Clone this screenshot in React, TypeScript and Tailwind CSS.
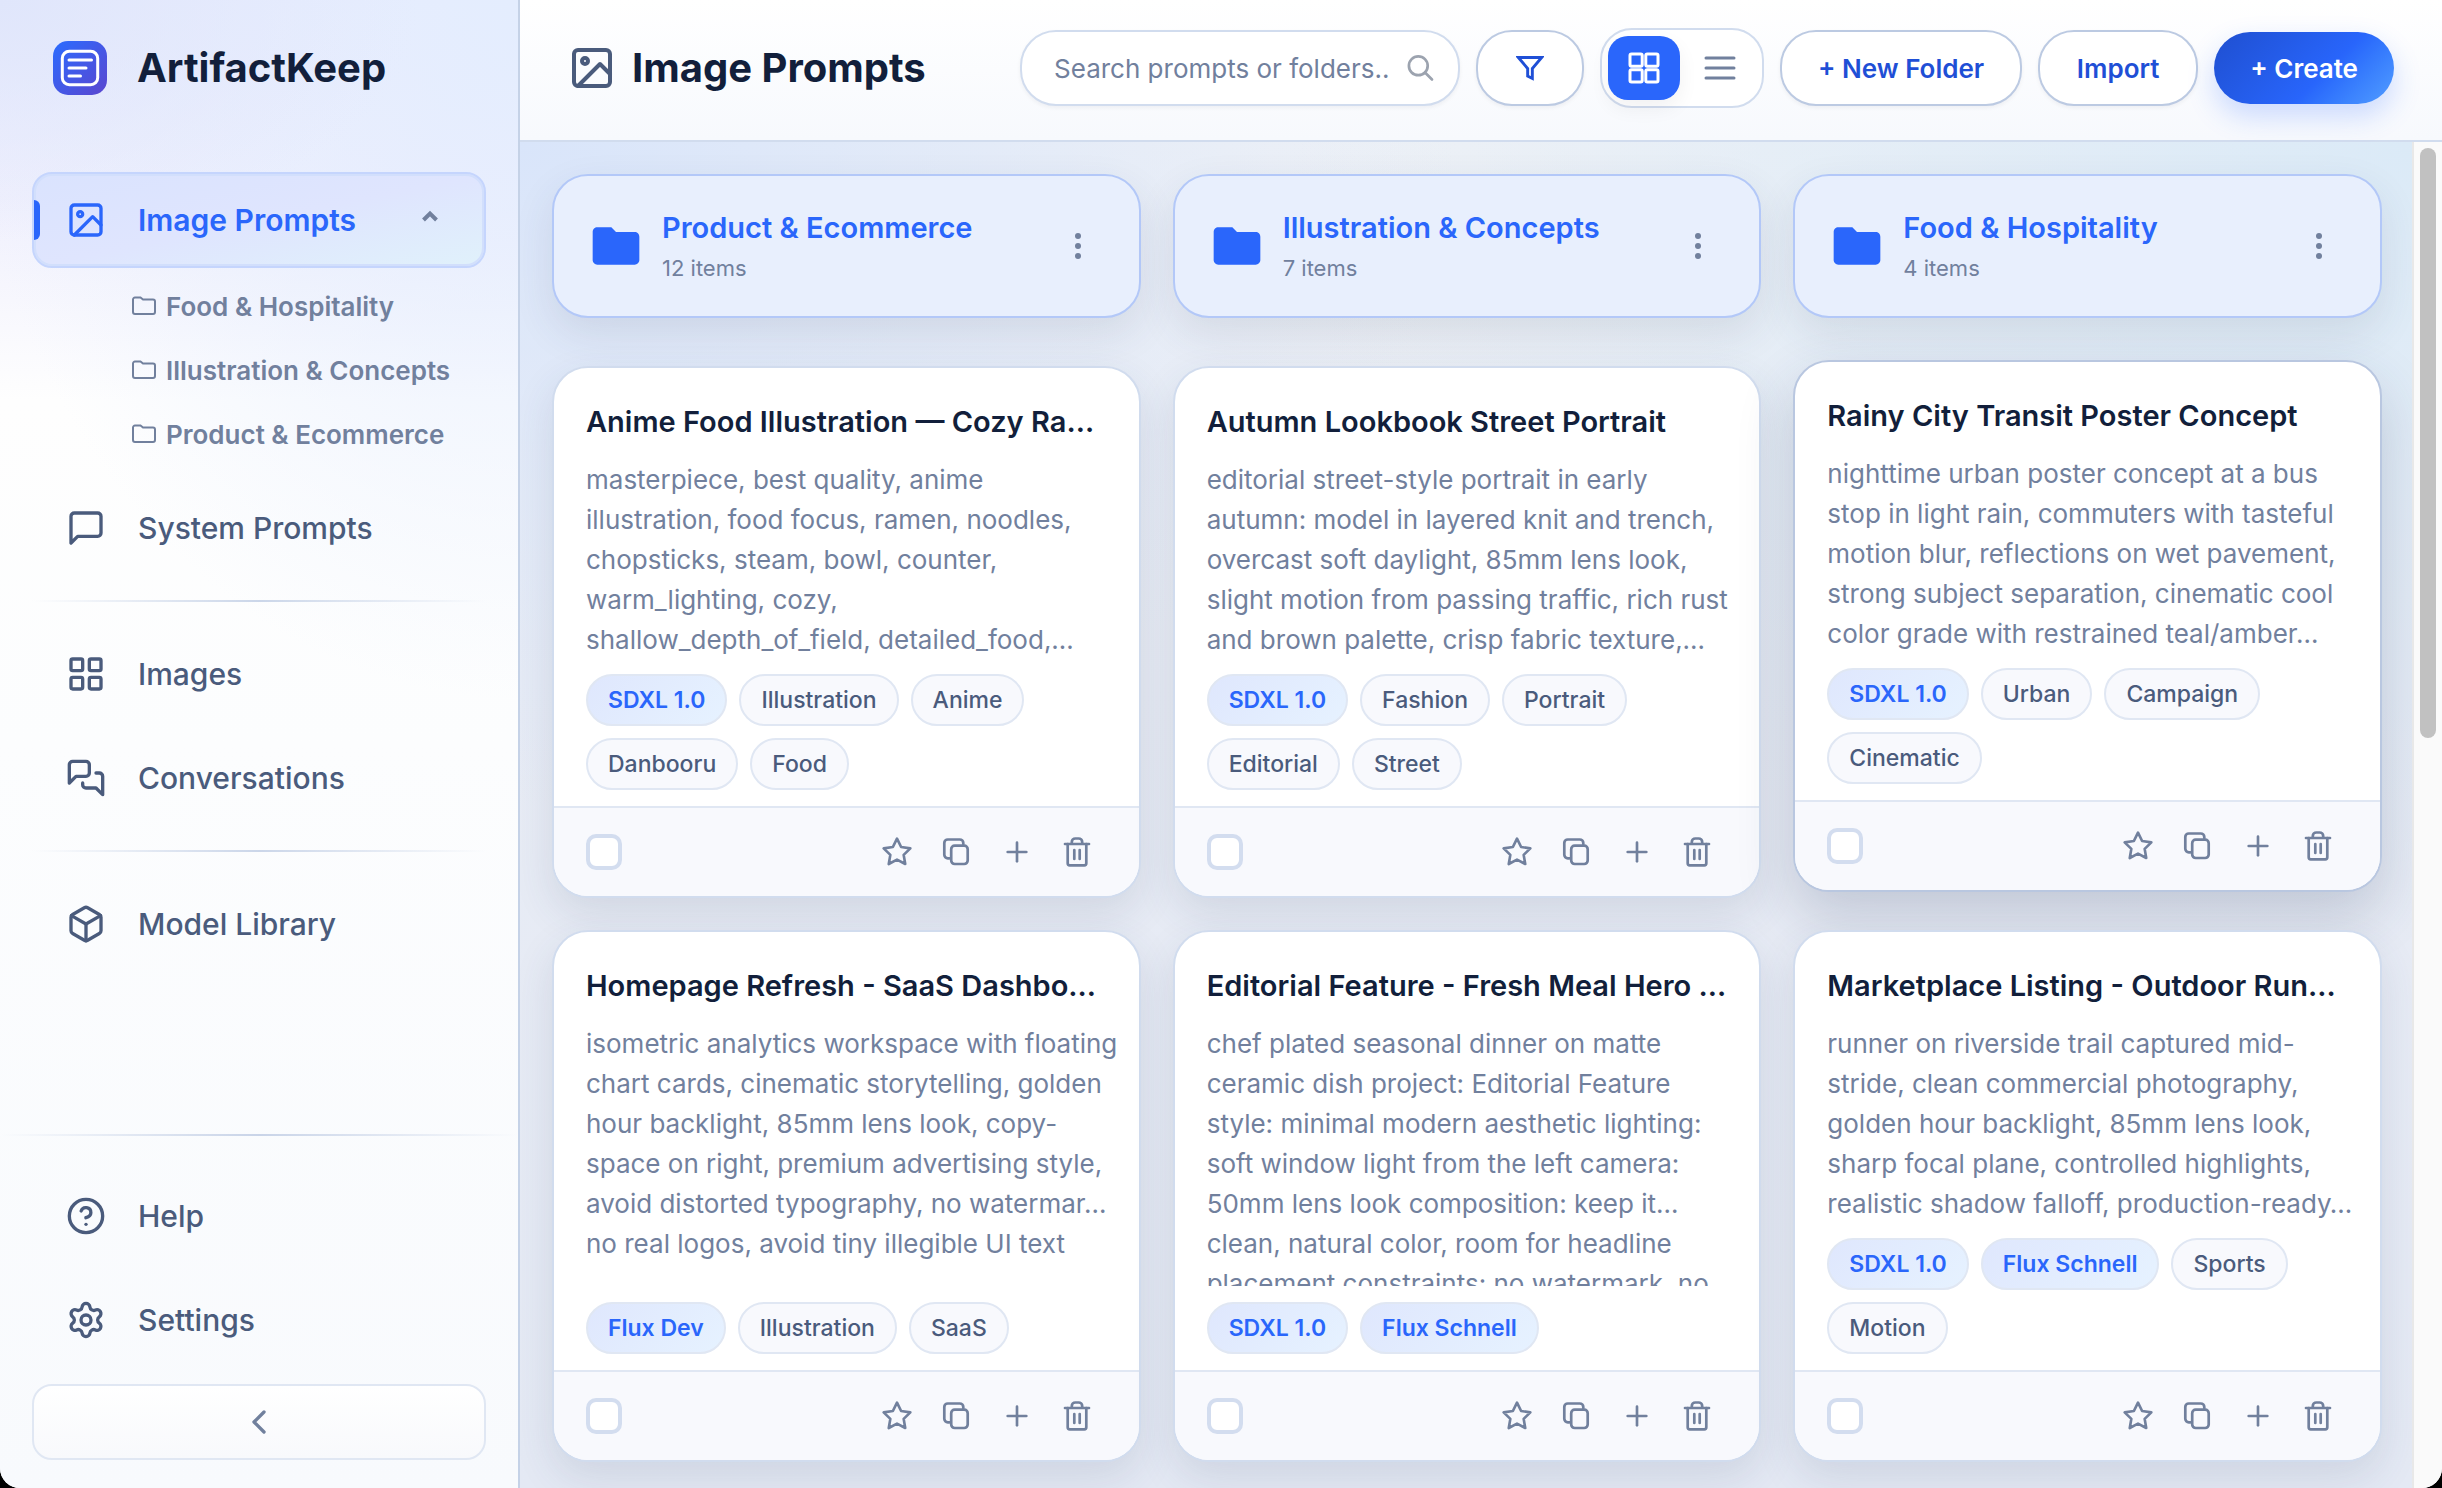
import { useState, type ReactNode } from "react";
import clsx from "clsx";
import { ChevronLeft, LayoutGrid, Plus, Settings } from "lucide-react";
import {
  FiBox,
  FiFilter,
  FiHelpCircle,
  FiImage,
  FiMessageSquare,
  FiStar,
} from "react-icons/fi";
import { MdFolder } from "react-icons/md";

const folders = [
  { name: "Product & Ecommerce", count: 12 },
  { name: "Illustration & Concepts", count: 7 },
  { name: "Food & Hospitality", count: 4 },
];

type Tag = { label: string; model?: boolean };
type Prompt = {
  title: string;
  lines: string[];
  tags: Tag[];
  lifted?: boolean;
};

const prompts: Prompt[] = [
  {
    title: "Anime Food Illustration — Cozy Ra…",
    lines: [
      "masterpiece, best quality, anime",
      "illustration, food focus, ramen, noodles,",
      "chopsticks, steam, bowl, counter,",
      "warm_lighting, cozy,",
      "shallow_depth_of_field, detailed_food,…",
    ],
    tags: [
      { label: "SDXL 1.0", model: true },
      { label: "Illustration" },
      { label: "Anime" },
      { label: "Danbooru" },
      { label: "Food" },
    ],
  },
  {
    title: "Autumn Lookbook Street Portrait",
    lines: [
      "editorial street-style portrait in early",
      "autumn: model in layered knit and trench,",
      "overcast soft daylight, 85mm lens look,",
      "slight motion from passing traffic, rich rust",
      "and brown palette, crisp fabric texture,…",
    ],
    tags: [
      { label: "SDXL 1.0", model: true },
      { label: "Fashion" },
      { label: "Portrait" },
      { label: "Editorial" },
      { label: "Street" },
    ],
  },
  {
    title: "Rainy City Transit Poster Concept",
    lines: [
      "nighttime urban poster concept at a bus",
      "stop in light rain, commuters with tasteful",
      "motion blur, reflections on wet pavement,",
      "strong subject separation, cinematic cool",
      "color grade with restrained teal/amber…",
    ],
    tags: [
      { label: "SDXL 1.0", model: true },
      { label: "Urban" },
      { label: "Campaign" },
      { label: "Cinematic" },
    ],
    lifted: true,
  },
  {
    title: "Homepage Refresh - SaaS Dashbo…",
    lines: [
      "isometric analytics workspace with floating",
      "chart cards, cinematic storytelling, golden",
      "hour backlight, 85mm lens look, copy-",
      "space on right, premium advertising style,",
      "avoid distorted typography, no watermar…",
      "no real logos, avoid tiny illegible UI text",
    ],
    tags: [
      { label: "Flux Dev", model: true },
      { label: "Illustration" },
      { label: "SaaS" },
    ],
  },
  {
    title: "Editorial Feature - Fresh Meal Hero …",
    lines: [
      "chef plated seasonal dinner on matte",
      "ceramic dish project: Editorial Feature",
      "style: minimal modern aesthetic lighting:",
      "soft window light from the left camera:",
      "50mm lens look composition: keep it…",
      "clean, natural color, room for headline",
      "placement constraints: no watermark, no",
    ],
    tags: [
      { label: "SDXL 1.0", model: true },
      { label: "Flux Schnell", model: true },
    ],
  },
  {
    title: "Marketplace Listing - Outdoor Run…",
    lines: [
      "runner on riverside trail captured mid-",
      "stride, clean commercial photography,",
      "golden hour backlight, 85mm lens look,",
      "sharp focal plane, controlled highlights,",
      "realistic shadow falloff, production-ready…",
    ],
    tags: [
      { label: "SDXL 1.0", model: true },
      { label: "Flux Schnell", model: true },
      { label: "Sports" },
      { label: "Motion" },
    ],
  },
];

const LogoIcon = () => (
  <svg viewBox="0 0 54 54" fill="none" className="size-[54px]" aria-hidden="true">
    <defs>
      <linearGradient id="logo" x1="0" y1="0" x2="54" y2="54" gradientUnits="userSpaceOnUse">
        <stop stopColor="#2b6cff" />
        <stop offset="1" stopColor="#5b46cf" />
      </linearGradient>
    </defs>
    <rect width="54" height="54" rx="15" fill="url(#logo)" />
    <rect x="9.3" y="10.3" width="35.4" height="33.4" rx="7" stroke="#fff" strokeWidth="3" />
    <path d="M16 19h22.5M16 27h17M16 35h11.5" stroke="#fff" strokeWidth="3" strokeLinecap="round" />
  </svg>
);

const ConversationsIcon = () => (
  <svg
    viewBox="0 0 24 24"
    fill="none"
    stroke="currentColor"
    strokeWidth="2"
    strokeLinecap="round"
    strokeLinejoin="round"
    className="size-10"
  >
    <path d="M14 9a2 2 0 0 1-2 2H6l-4 4V4a2 2 0 0 1 2-2h8a2 2 0 0 1 2 2z" />
    <path d="M18 9h2a2 2 0 0 1 2 2v11l-4-4h-6a2 2 0 0 1-2-2v-1" />
  </svg>
);

const FolderOutlineIcon = () => (
  <svg viewBox="0 0 24 24" fill="none" stroke="currentColor" strokeWidth="2" className="size-6">
    <path d="M3 3.500h5.500l2.500 2h10a2 2 0 0 1 2 2v10.500a2 2 0 0 1-2 2H3a2 2 0 0 1-2-2V5.500a2 2 0 0 1 2-2z" />
  </svg>
);

const SearchIcon = () => (
  <svg
    viewBox="0 0 28 28"
    fill="none"
    stroke="currentColor"
    strokeWidth="2.7"
    strokeLinecap="round"
    className="size-7 shrink-0 text-[#9ca3af]"
  >
    <circle cx="12.3" cy="11.8" r="9.4" />
    <path d="M19 18.500l7 7" />
  </svg>
);

const TilesIcon = () => (
  <svg viewBox="0 0 32 32" fill="none" stroke="currentColor" strokeWidth="3" className="size-8">
    <rect x="2" y="2" width="12.2" height="12.2" rx="1.5" />
    <rect x="17.8" y="2" width="12.2" height="12.2" rx="1.5" />
    <rect x="2" y="17.8" width="12.2" height="12.2" rx="1.5" />
    <rect x="17.8" y="17.8" width="12.2" height="12.2" rx="1.5" />
  </svg>
);

const RowsIcon = () => (
  <svg
    viewBox="0 0 32 32"
    stroke="currentColor"
    strokeWidth="3"
    strokeLinecap="round"
    className="size-8"
  >
    <path d="M2 6h28M2 16h28M2 26h28" />
  </svg>
);

const CopyIcon = () => (
  <svg
    viewBox="0 0 32 32"
    fill="none"
    stroke="currentColor"
    strokeWidth="2.7"
    strokeLinecap="round"
    strokeLinejoin="round"
    className="size-8"
  >
    <rect x="10.2" y="9.7" width="16.5" height="18.3" rx="3.5" />
    <path d="M8.5 22.3H6.8a3.5 3.5 0 0 1-3.5-3.5V7a3.5 3.5 0 0 1 3.5-3.5h12a3.5 3.5 0 0 1 3.5 3.5v1" />
  </svg>
);

const TrashIcon = () => (
  <svg
    viewBox="0 0 32 32"
    fill="none"
    stroke="currentColor"
    strokeWidth="2.7"
    strokeLinecap="round"
    strokeLinejoin="round"
    className="size-8"
  >
    <path d="M4 8h24M10.8 7.5V6a3.5 3.5 0 0 1 3.500-3.500h3.400a3.500 3.500 0 0 1 3.500 3.500v1.500" />
    <path d="M6.7 8v19.300a2 2 0 0 0 2 2h14.600a2 2 0 0 0 2-2V8M13.3 14v9M18.7 14v9" />
  </svg>
);

const NavItem = ({
  icon,
  label,
  active = false,
}: {
  icon: ReactNode;
  label: string;
  active?: boolean;
}) => (
  <a
    href="#"
    className={clsx(
      "relative flex h-24 items-center gap-8 rounded-[20px] border-2 pr-[42px] pl-8 text-[30px]",
      active
        ? "border-[#c5d5fd] bg-linear-to-br from-[#dae3fe] via-[#dfe5fe] to-[#e0f1fb] font-semibold text-[#2a66fb] inset-ring-2 inset-ring-[#d2dffc]"
        : "border-transparent font-medium text-[#4a5b7c]"
    )}
  >
    {active && (
      <span className="absolute top-[26px] left-0 h-10 w-1.5 rounded-r-md bg-[#2a66fb]" />
    )}
    {icon}
    <span className="flex-1 whitespace-nowrap">{label}</span>
    {active && (
      <svg
        viewBox="0 0 24 24"
        fill="none"
        stroke="#71809d"
        strokeWidth="4"
        className="size-6"
      >
        <path d="M5.500 12l6.500-6.500 6.500 6.500" />
      </svg>
    )}
  </a>
);

const Divider = () => (
  <div className="mt-4 mb-6 h-0.5 bg-linear-to-r from-transparent via-[#cbd6e9] to-transparent" />
);

const Sidebar = () => (
  <aside className="flex w-[520px] shrink-0 flex-col border-r-2 border-[#c5d2e7] bg-[radial-gradient(420px_240px_at_0%_0%,#e0e6fb_0%,transparent_100%),radial-gradient(560px_700px_at_100%_0%,#e4edfe_0%,transparent_100%),linear-gradient(to_bottom,#ebedfe_0px,#f0f0fd_200px,#fefefe_400px,#fcfdfe_50%,#f8fafd_100%)]">
    <div className="flex h-[136px] shrink-0 items-center gap-[30px] pl-[53px]">
      <LogoIcon />
      <span className="text-[40px] font-bold text-[#121f3b]">ArtifactKeep</span>
    </div>

    <nav className="flex flex-1 flex-col px-8 pt-9">
      <NavItem icon={<FiImage className="size-10" />} label="Image Prompts" active />
      <ul className="mt-1.5 mb-3.5 pl-[100px]">
        {["Food & Hospitality", "Illustration & Concepts", "Product & Ecommerce"].map((name) => (
          <li key={name}>
            <a
              href="#"
              className="flex h-16 items-center gap-2.5 text-[26px] font-semibold whitespace-nowrap text-[#71809d]"
            >
              <FolderOutlineIcon />
              {name}
            </a>
          </li>
        ))}
      </ul>
      <NavItem icon={<FiMessageSquare className="size-10" />} label="System Prompts" />
      <div className="h-2" />
      <Divider />
      <NavItem icon={<LayoutGrid className="size-10" />} label="Images" />
      <div className="h-2" />
      <NavItem icon={<ConversationsIcon />} label="Conversations" />
      <div className="h-2" />
      <Divider />
      <NavItem icon={<FiBox className="size-10" />} label="Model Library" />
    </nav>

    <div className="flex flex-col gap-2 pb-7">
      <div className="mb-6 h-0.5 bg-linear-to-r from-transparent via-[#c9d4e8] to-transparent" />
      <div className="flex flex-col gap-2 px-8">
        <NavItem icon={<FiHelpCircle className="size-10" />} label="Help" />
        <NavItem icon={<Settings className="size-10" />} label="Settings" />
        <button
          type="button"
          aria-label="Collapse sidebar"
          className="mt-2 flex h-[76px] items-center justify-center rounded-[20px] border-2 border-[#e0e7f3] bg-linear-to-b from-white to-[#f8f9fc] text-[#71809d]"
        >
          <ChevronLeft className="size-10" />
        </button>
      </div>
    </div>
  </aside>
);

const outlineButton =
  "flex h-[76px] shrink-0 items-center justify-center rounded-[36px] border-2 border-[#bccae2] bg-white text-[26px] font-semibold whitespace-nowrap text-[#1f4fd6] shadow-[0_2px_4px_rgba(15,23,42,0.05)]";

const Header = () => (
  <header className="flex h-[142px] shrink-0 items-center gap-4 border-b-2 border-[#d1dcee] bg-linear-to-b from-white to-[#f7f9fd] pr-12 pb-1 pl-12">
    <h1 className="flex flex-1 items-center gap-4 text-[40px] font-bold whitespace-nowrap text-[#121f3b]">
      <FiImage className="size-12 shrink-0 text-[#4a5b7c]" />
      Image Prompts
    </h1>
    <label className="flex h-[76px] w-[440px] items-center rounded-[36px] border-2 border-[#d1dcee] bg-white pr-6 pl-8 shadow-[0_2px_4px_rgba(15,23,42,0.05)]">
      <input
        type="text"
        aria-label="Search prompts or folders"
        placeholder="Search prompts or folders.."
        className="min-w-0 flex-1 text-[26px] text-[#121f3b] outline-none placeholder:text-[#71809d]"
      />
      <SearchIcon />
    </label>
    <button type="button" aria-label="Filter" className={clsx(outlineButton, "w-[108px]")}>
      <FiFilter className="size-7 [stroke-linecap:butt] [stroke-linejoin:miter] [stroke-width:2.5]" />
    </button>
    <div className="flex h-20 shrink-0 gap-1 rounded-[32px] border-2 border-[#d1dcee] bg-white p-1.5">
      <button
        type="button"
        aria-label="Grid view"
        className="flex w-[72px] items-center justify-center rounded-[20px] bg-[#2a66fb] text-white shadow-[0_8px_20px_rgba(15,23,42,0.06)]"
      >
        <TilesIcon />
      </button>
      <button
        type="button"
        aria-label="List view"
        className="flex w-[72px] items-center justify-center rounded-[20px] text-[#71809d]"
      >
        <RowsIcon />
      </button>
    </div>
    <button type="button" className={clsx(outlineButton, "px-9")}>
      + New Folder
    </button>
    <button type="button" className={clsx(outlineButton, "w-40")}>
      Import
    </button>
    <button
      type="button"
      className="flex h-[72px] shrink-0 items-center rounded-[36px] bg-linear-135 from-[#1f4fd0] via-[#2865fb] via-60% to-[#539dff] px-9 text-[26px] font-semibold whitespace-nowrap text-white shadow-[0_12px_28px_rgba(37,99,255,0.22)]"
    >
      + Create
    </button>
  </header>
);

const FolderCard = ({ name, count }: { name: string; count: number }) => (
  <article className="flex h-36 items-center gap-[18px] rounded-[36px] border-2 border-[#b3c8f8] bg-[#e8effd] pr-[41px] pl-[34px] shadow-[0_16px_40px_rgba(51,65,95,0.11)]">
    <MdFolder className="size-14 shrink-0 text-[#2a66fb]" />
    <div className="min-w-0 flex-1">
      <h2 className="truncate text-[29px] leading-10 font-semibold text-[#2a66fb]">{name}</h2>
      <p className="mt-1 text-[22px] leading-8 text-[#71809d]">{count} items</p>
    </div>
    <button
      type="button"
      aria-label={`${name} options`}
      className="flex h-10 w-10 items-center justify-center text-[#71809d]"
    >
      <svg viewBox="0 0 6 28" fill="currentColor" className="h-7 w-1.5">
        <circle cx="3" cy="4" r="3" />
        <circle cx="3" cy="14" r="3" />
        <circle cx="3" cy="24" r="3" />
      </svg>
    </button>
  </article>
);

const PromptCard = ({ title, lines, tags, lifted }: Prompt) => {
  const [selected, setSelected] = useState(false);

  return (
    <article
      className={clsx(
        "relative flex h-[532px] flex-col overflow-hidden rounded-[36px] border-2 bg-white",
        lifted
          ? "-translate-y-1.5 border-[#b9c7e0] shadow-[0_24px_56px_rgba(41,55,90,0.2)]"
          : "border-[#d1dcee] shadow-[0_16px_40px_rgba(51,65,95,0.12)]"
      )}
    >
      <div className="flex min-h-0 flex-1 flex-col pt-8 pr-5 pb-4 pl-8">
        <h2 className="truncate text-[29px] leading-[44px] font-semibold text-[#121f3b]">
          {title}
        </h2>
        <p className="mt-4 min-h-0 flex-1 overflow-hidden text-[26px] leading-10 whitespace-pre text-[#71809d]">
          {lines.join("\n")}
        </p>
        <ul className="mt-4 flex flex-wrap gap-3">
          {tags.map((tag) => (
            <li
              key={tag.label}
              className={clsx(
                "flex h-[52px] items-center rounded-[26px] border-2 border-[#e0e7f3] px-5 text-[23px]",
                tag.model
                  ? "bg-linear-135 from-[#dfe7fd] to-[#e6f2ff] font-semibold text-[#2a66fb]"
                  : "bg-[#f8f9fd] font-medium text-[#4a5b7c]"
              )}
            >
              {tag.label}
            </li>
          ))}
        </ul>
      </div>
      <footer className="flex h-[90px] shrink-0 items-center justify-between border-t-2 border-[#e0e7f3] bg-[#f8f9fd] pr-8 pl-8">
        <input
          type="checkbox"
          aria-label={`Select ${title}`}
          checked={selected}
          onChange={() => setSelected(!selected)}
          className="size-9 appearance-none rounded-[10px] border-4 border-[#d3ddef] bg-white checked:bg-[#2a66fb]"
        />
        <div className="flex text-[#71809d]">
          <button type="button" aria-label="Favorite" className="flex size-[60px] items-center justify-center">
            <FiStar className="size-8" />
          </button>
          <button type="button" aria-label="Copy" className="flex size-[60px] items-center justify-center">
            <CopyIcon />
          </button>
          <button type="button" aria-label="Add" className="flex size-[60px] items-center justify-center">
            <Plus className="size-8" />
          </button>
          <button type="button" aria-label="Delete" className="flex size-[60px] items-center justify-center">
            <TrashIcon />
          </button>
        </div>
      </footer>
    </article>
  );
};

export default function App() {
  return (
    <div className="h-screen bg-black font-[Inter,sans-serif]">
      <div className="flex h-full overflow-hidden rounded-b-[20px] bg-white">
        <Sidebar />
        <div className="flex min-w-0 flex-1 flex-col">
          <Header />
          <div className="flex min-h-0 flex-1">
            <main className="min-w-0 flex-1 overflow-hidden bg-[radial-gradient(ellipse_at_0%_0%,#d9e5fa_0%,transparent_35%),radial-gradient(ellipse_at_100%_0%,#dbeaf7_0%,transparent_42%),linear-gradient(to_bottom,#eef1f6_0%,#e8ecf5_40%,#e4e9f4_100%)] py-8 pr-[30px] pl-8">
              <section className="grid grid-cols-3 gap-8">
                {folders.map((folder) => (
                  <FolderCard key={folder.name} {...folder} />
                ))}
              </section>
              <section className="mt-12 grid grid-cols-3 gap-8">
                {prompts.map((prompt) => (
                  <PromptCard key={prompt.title} {...prompt} />
                ))}
              </section>
            </main>
            {/* Scroll track */}
            <div className="w-[30px] shrink-0 border-l-2 border-[#e8e8e8] bg-[#fafafa] pt-1.5 pl-1.5">
              <div className="h-[590px] w-4 rounded-full bg-[#c1c1c1]" />
            </div>
          </div>
        </div>
      </div>
    </div>
  );
}
